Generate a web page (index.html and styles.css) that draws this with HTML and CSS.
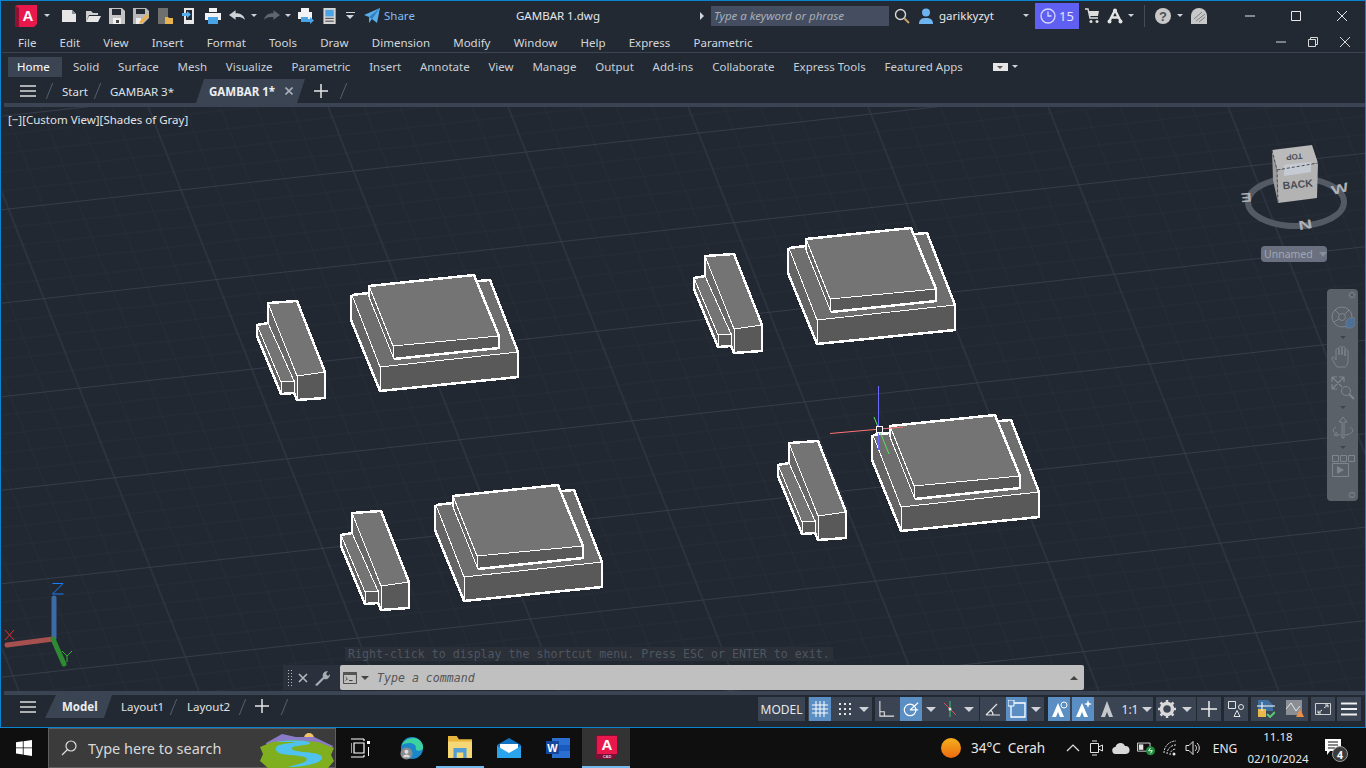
FILE: index.html
```html
<!DOCTYPE html>
<html lang="en">
<head>
  <meta charset="UTF-8">
  <title>GAMBAR 1.dwg</title>
  <link rel="stylesheet" href="styles.css">
</head>
<body>
<div class="window">

  <!-- title bar -->
  <div class="titlebar">
    <div class="qat">
      <svg class="logo" viewBox="0 0 24 22"><path d="M0 1l3-1h19v19l-3 3H0z" fill="#e8184d"/><path d="M0 1l4 2v19H0z" fill="#8f1233"/><text x="13" y="16" class="logo-a">A</text></svg>
      <span class="caret qat-c1"></span>
      <span class="qb qat-new"><svg class="ic16" viewBox="0 0 16 16"><path d="M1 2h10l4 4v8H1z" fill="#e6e6e6"/><path d="M11 2v4h4z" fill="#8a8f96"/></svg></span>
      <span class="qb"><svg class="ic16" viewBox="0 0 16 16"><path d="M1 3h5l2 2h5v2H4L1 14z" fill="#cfcfcf"/><path d="M4 8h12l-3 6H1z" fill="#e6e6e6"/></svg></span>
      <span class="qb"><svg class="ic16" viewBox="0 0 16 16"><path d="M0 0h13l3 3v13H0z" fill="#c4c4c4"/><path d="M3 1h9v6H3z" fill="#232a34"/><path d="M4 10h8v6H4z" fill="#f0f0f0"/><path d="M7 12h3v3H7z" fill="#444"/></svg></span>
      <span class="qb"><svg class="ic16" viewBox="0 0 16 16"><path d="M0 0h13l3 3v7l-6 6H0z" fill="#b9b9b9"/><path d="M3 1h9v5H3z" fill="#232a34"/><path d="M3 10h5v6H3z" fill="#eee"/><path d="M14 6l2 2-7 7-3 1 1-3z" fill="#f0b14a"/></svg></span>
      <span class="qb"><svg class="ic16" viewBox="0 0 16 16"><path d="M1 0h10v16H1z" fill="#6f6f6f"/><path d="M8 9h3l1 1h4v6H8z" fill="#e7b450"/></svg></span>
      <span class="qb"><svg class="ic16" viewBox="0 0 16 16"><path d="M3 0h10v16H3z" fill="#e8e8e8"/><path d="M5 2h6v10H5z" fill="#232a34"/><path d="M1 5h5V3l4 3.500-4 3.500V8H1z" fill="#55aef0"/></svg></span>
      <span class="qb"><svg class="ic16" viewBox="0 0 16 16"><path d="M4 0h8v4H4z" fill="#f2f2f2"/><path d="M0 5h16v7H0z" fill="#f2f2f2"/><path d="M3 9h10v7H3z" fill="#4aa3e4"/></svg></span>
      <span class="qb"><svg class="ic16" viewBox="0 0 17 16"><path d="M0 7l7-5v3c5 0 9 2 10 7-3-3-6-3-10-3v3z" fill="#cfd3d8"/></svg></span>
      <span class="caret qat-c2"></span>
      <span class="qb qat-redo"><svg class="ic16" viewBox="0 0 17 16"><path d="M17 7l-7-5v3C5 5 1 7 0 12c3-3 6-3 10-3v3z" fill="#5f6670"/></svg></span>
      <span class="caret qat-c3"></span>
      <span class="qb qat-plot"><svg class="ic16" viewBox="0 0 16 16"><path d="M3 0h8v4H3z" fill="#f2f2f2"/><path d="M0 4h14v7H0z" fill="#f2f2f2"/><path d="M3 9h7v5H3z" fill="#4aa3e4"/><path d="M7 11h5V9l4 3.500-4 3.500v-2H7z" fill="#4aa3e4"/></svg></span>
      <span class="qb"><svg class="ic16" viewBox="0 0 14 17"><path d="M0 0h13v17H0z" fill="#d5d5d5"/><path d="M2 2h9v7H2z" fill="#4aa3e4"/><path d="M2 11h9M2 14h9" stroke="#333"/></svg></span>
      <span class="qat-menu"></span>
      <svg class="ic16 qat-plane" viewBox="0 0 16 16"><path d="M0 7L16 0l-3 15-5-4-3 4v-6z" fill="#58aeea"/><path d="M5 9l11-9-8 11z" fill="#2f7fbd"/></svg>
      <span class="share">Share</span>
    </div>
    <div class="doc-title">GAMBAR 1.dwg</div>
    <span class="arrow-right"></span>
    <div class="search">Type a keyword or phrase</div>
    <svg class="ic16 t-mag" viewBox="0 0 16 16"><circle cx="6.500" cy="6.500" r="5" fill="none" stroke="#d8d8d8" stroke-width="1.400"/><path d="M10.500 10.500L15 15" stroke="#c9a06a" stroke-width="2"/></svg>
    <svg class="ic16 t-user" viewBox="0 0 16 16"><circle cx="8" cy="4.500" r="4" fill="#6db3f0"/><path d="M1 16c0-5 3-6 7-6s7 1 7 6z" fill="#6db3f0"/></svg>
    <span class="username">garikkyzyt</span>
    <span class="caret"></span>
    <div class="trial">
      <svg class="ic16" viewBox="0 0 16 16"><circle cx="8" cy="8" r="7" fill="none" stroke="#d9d9ff" stroke-width="1.300"/><path d="M8 3.500V8h3.500" fill="none" stroke="#d9d9ff" stroke-width="1.300"/></svg>
      <span>15</span>
    </div>
    <svg class="ic16 t-cart" viewBox="0 0 16 16"><path d="M1 1h3l2 9h8" fill="none" stroke="#ddd" stroke-width="1.400"/><path d="M4.500 3H15l-1 5H6z" fill="#ddd"/><circle cx="7" cy="13.500" r="1.500" fill="#ddd"/><circle cx="13" cy="13.500" r="1.500" fill="#ddd"/></svg>
    <svg class="ic16 t-a" viewBox="0 0 16 16"><path d="M8 2L2.500 13M8 2l5.500 11M4.500 9.500h7" fill="none" stroke="#e4e4e4" stroke-width="2.400"/><circle cx="8" cy="2.500" r="2" fill="#e4e4e4"/><circle cx="2.500" cy="13.500" r="2" fill="#e4e4e4"/><circle cx="13.500" cy="13.500" r="2" fill="#e4e4e4"/></svg>
    <span class="caret t-c2"></span>
    <span class="t-sep"></span>
    <svg class="ic16 t-help" viewBox="0 0 16 16"><circle cx="8" cy="8" r="8" fill="#c8c8c8"/><text x="8" y="12.500" class="help-q">?</text></svg>
    <span class="caret t-c3"></span>
    <svg class="ic16 t-globe" viewBox="0 0 16 16"><path d="M0 8a8 8 0 0 1 16 0v8H0z" fill="#c8c8c8"/><path d="M3 11l8-7M5 13l9-7M8 14l6-5" stroke="#7c8086"/></svg>
    <div class="winbtns">
      <span class="winbtn"><svg class="ic12" viewBox="0 0 12 12"><path d="M1 6h10" stroke="#e6e6e6"/></svg></span>
      <span class="winbtn"><svg class="ic12" viewBox="0 0 12 12"><path d="M1.500 1.500h9v9h-9z" fill="none" stroke="#e6e6e6"/></svg></span>
      <span class="winbtn"><svg class="ic12" viewBox="0 0 12 12"><path d="M1 1l10 10M11 1L1 11" stroke="#e6e6e6"/></svg></span>
    </div>
  </div>

  <!-- menu bar -->
  <div class="menubar">
    <span>File</span><span>Edit</span><span>View</span><span>Insert</span><span>Format</span><span>Tools</span><span>Draw</span><span>Dimension</span><span>Modify</span><span>Window</span><span>Help</span><span>Express</span><span>Parametric</span>
    <div class="docbtns">
      <svg class="ic12" viewBox="0 0 12 12"><path d="M1 6h10" stroke="#d8d8d8"/></svg>
      <svg class="ic12" viewBox="0 0 12 12"><path d="M1.500 3.500h7v7h-7zM3.500 3.500v-2h7v7h-2" fill="none" stroke="#d8d8d8"/></svg>
      <svg class="ic12" viewBox="0 0 12 12"><path d="M1 1l10 10M11 1L1 11" stroke="#d8d8d8"/></svg>
    </div>
  </div>

  <!-- ribbon tabs -->
  <div class="ribbon">
    <span class="rtab on">Home</span><span class="rtab">Solid</span><span class="rtab">Surface</span><span class="rtab">Mesh</span><span class="rtab">Visualize</span><span class="rtab">Parametric</span><span class="rtab">Insert</span><span class="rtab">Annotate</span><span class="rtab">View</span><span class="rtab">Manage</span><span class="rtab">Output</span><span class="rtab">Add-ins</span><span class="rtab">Collaborate</span><span class="rtab">Express Tools</span><span class="rtab">Featured Apps</span>
    <span class="ribbon-min"><span class="mini-tri"></span></span>
    <span class="caret ribbon-c"></span>
  </div>

  <!-- file tabs -->
  <div class="doctabs">
    <svg class="burger" viewBox="0 0 16 12"><path d="M0 1h16M0 6h16M0 11h16" stroke="#dcdcdc" stroke-width="1.500"/></svg>
    <span class="slash dt-s1"></span>
    <span class="dt dt-start">Start</span>
    <span class="slash dt-s2"></span>
    <span class="dt dt-g3">GAMBAR 3*</span>
    <div class="dt-active">
      <span class="dt-active-name">GAMBAR 1*</span>
      <svg class="ic8" viewBox="0 0 8 8"><path d="M0.500 0.500l7 7M7.500 0.500l-7 7" stroke="#a9afb7" stroke-width="1.600"/></svg>
    </div>
    <svg class="plus dt-plus" viewBox="0 0 14 14"><path d="M7 0v14M0 7h14" stroke="#e6e6e6" stroke-width="1.500"/></svg>
    <span class="slash dt-s3"></span>
  </div>
  <div class="strip"></div>

  <!-- drawing area -->
  <div class="viewport">
    <svg class="canvas" viewBox="2 107 1363 584">
      <defs>
        <pattern id="grid" patternUnits="userSpaceOnUse" width="172.500" height="89.600" patternTransform="matrix(1 -0.11 0.395 1 77.05 154.69)">
          <path d="M17.250 0V89.600M51.750 0V89.600M120.750 0V89.600M155.250 0V89.600M0 8.960H172.500M0 26.880H172.500M0 62.720H172.500M0 80.640H172.500" stroke="#272e38" stroke-width="0.800"/>
          <path d="M86.250 0V89.600M0 44.800H172.500" stroke="#363d4a" stroke-width="1"/>
        </pattern>
        <g id="part">
          <!-- small piece -->
          <path d="M257 325L268 323 294 381 281 382z" fill="#747474"/>
          <path d="M257 325L281 382V394L257 336z" fill="#626262"/>
          <path d="M281 382L294 381V393L281 394z" fill="#595959"/>
          <path d="M268 303L297 376V400L294 393V381L268 323z" fill="#686868"/>
          <path d="M268 303L297 301 325 372 297 376z" fill="#747474"/>
          <path d="M297 376L325 372V398L297 400z" fill="#595959"/>
          <path class="thin" d="M257 325L281 382V394M281 382L294 381V393M268 303L297 376V400M268 323L294 381M297 376L325 372"/>
          <path class="thick" d="M268 303L297 301 325 372V398L297 400 294 393 281 394 257 336V325L268 323z"/>
          <!-- large piece -->
          <path d="M352 295L490 280 518 352 380 367z" fill="#6e6e6e"/>
          <path d="M352 295L380 367V391L351 320z" fill="#646464"/>
          <path d="M380 367L518 352V377L380 391z" fill="#595959"/>
          <path d="M369 286L393 346V359L369 297z" fill="#666"/>
          <path d="M369 286L474 275 499 336 393 346z" fill="#747474"/>
          <path d="M393 346L499 336V348L394 359z" fill="#595959"/>
          <path class="thin" d="M352 295L380 367V391M380 367L518 352M369 286L393 346V359M369 297L394 359M393 346L499 336"/>
          <path class="thick" d="M369 297V286L474 275 499 336V348L394 359"/>
          <path class="thick" d="M352 295L369 293M478 281L490 280 518 352V377L380 391 351 320V295"/>
        </g>
      </defs>
      <rect x="2" y="107" width="1363" height="584" fill="url(#grid)"/>

      <use href="#part"/>
      <use href="#part" x="437" y="-47"/>
      <use href="#part" x="84" y="210"/>
      <use href="#part" x="521" y="140"/>

      <!-- crosshair at the origin -->
      <path d="M878.500 386V450" stroke="#6a6aff"/>
      <path d="M830 433.500L903 427" stroke="#ff7272"/>
      <path d="M874 417L889 454" stroke="#58e058"/>
      <rect x="876.500" y="426.500" width="6" height="6" fill="#2a313c" stroke="#fff"/>

      <!-- world axes -->
      <path d="M54 598V638" stroke="#3d6ba6" stroke-width="5" stroke-linecap="round"/>
      <path d="M53 639L7 645" stroke="#a65050" stroke-width="5" stroke-linecap="round"/>
      <path d="M53 639L64 664" stroke="#2f8a33" stroke-width="5" stroke-linecap="round"/>
      <path d="M52.500 583.500h10.500l-10.500 10.500h11" fill="none" stroke="#1a7cff"/>
      <path d="M5 630l9 10M14 630l-9 10" stroke="#e62e2e"/>
      <path d="M62 651l5 5 5-5M67 656v6" fill="none" stroke="#2fb52f"/>

      <!-- compass and cube -->
      <ellipse cx="1296" cy="202" rx="48" ry="24" fill="none" stroke="#535a64" stroke-width="6"/>
      <text class="compass" transform="translate(1246 193) rotate(176) scale(1 0.8)">E</text>
      <text class="compass" transform="translate(1306 229) rotate(-10) scale(1.200 0.800)">N</text>
      <text class="compass" transform="translate(1341 193) rotate(-14) scale(1.150 0.800)">W</text>
      <path d="M1272 150L1312 145 1318 163 1277 170z" fill="#bababa"/>
      <path d="M1272 150L1277 170 1278 203 1273 180z" fill="#9c9c9c"/>
      <path d="M1277 170L1318 163 1317 198 1278 203z" fill="#b3b3b3"/>
      <path d="M1284 165L1311 162V172L1284 176z" fill="#c6cbd3"/>
      <path d="M1272 150L1277 170 1278 203M1277 170L1318 163" fill="none" stroke="#4b4f55" stroke-dasharray="3 2"/>
      <text class="cube-back" transform="translate(1298 188) rotate(-5)">BACK</text>
      <text class="cube-top" transform="translate(1294 154) rotate(175)">TOP</text>
    </svg>

    <div class="view-label">[−][Custom View][Shades of Gray]</div>

    <div class="unnamed">Unnamed <span class="unnamed-tri"></span></div>

    <div class="navbar">
      <svg class="nav-x" viewBox="0 0 8 8"><circle cx="4" cy="4" r="3.500" fill="#70757d"/><path d="M2.500 2.500l3 3M5.500 2.500l-3 3" stroke="#4d525a"/></svg>
      <svg class="nav-ic" viewBox="0 0 24 24"><circle cx="11" cy="11" r="10" fill="none" stroke="#80858d"/><circle cx="11" cy="11" r="3.500" fill="none" stroke="#80858d"/><path d="M4 4l5 5M18 4l-5 5M3 16l5-3" stroke="#80858d"/><path d="M15 15l3-3h6v7l-3 3h-6z" fill="#4e6f96" stroke="#80858d" stroke-width="0.500"/></svg>
      <span class="nav-tri"></span>
      <svg class="nav-ic nav-hand" viewBox="0 0 24 24"><path d="M6 22C4 19 1 15 1 13c0-2 3-1 4 2V5c0-2 3-2 3 0v5V3c0-2 3-2 3 0v7V3c0-2 3-2 3 0v8V6c0-2 3-2 3 0v10c0 3-2 6-3 6z" fill="none" stroke="#80858d"/></svg>
      <svg class="nav-ic" viewBox="0 0 24 24"><path d="M1 1l10 10M13 1L1 13M1 1v5M1 1h5M13 1H8M13 1v5M1 13V8M1 13h5" fill="none" stroke="#80858d" stroke-width="1.200"/><circle cx="15" cy="15" r="4.500" fill="none" stroke="#80858d"/><path d="M18 18l5 5" stroke="#80858d" stroke-width="2"/></svg>
      <span class="nav-tri"></span>
      <svg class="nav-ic" viewBox="0 0 24 24"><path d="M12 1l4 5h-3v16h-2V6H8z" fill="none" stroke="#80858d"/><path d="M5 11C0 14 2 18 10 19M19 11c5 3 3 7-5 8M6 16l-3 3 4 1" fill="none" stroke="#80858d"/></svg>
      <span class="nav-tri"></span>
      <svg class="nav-ic nav-motion" viewBox="0 0 24 24"><path d="M1.500 1.500h6v6h-6zM9.500 1.500h6v6h-6zM17.500 1.500h6v6h-6zM1.500 9.500h16v13h-16z" fill="none" stroke="#80858d"/><path d="M6 12l7 4-7 4z" fill="#80858d"/></svg>
      <svg class="nav-x nav-end" viewBox="0 0 8 8"><circle cx="4" cy="4" r="3.500" fill="#70757d"/><path d="M2 4h4" stroke="#4d525a"/></svg>
    </div>

    <div class="cmd-msg">Right-click to display the shortcut menu. Press ESC or ENTER to exit.</div>
    <div class="cmd">
      <div class="cmd-tools">
        <span class="grip"></span>
        <svg class="ic10" viewBox="0 0 10 10"><path d="M1 1l8 8M9 1l-8 8" stroke="#b5b9be" stroke-width="1.600"/></svg>
        <svg class="ic16" viewBox="0 0 16 16"><path d="M1 15l8-8c-1-3 1-6 5-6l-2 3 2 2 2-2c0 4-3 6-6 5l-7 7z" fill="#a9adb2"/></svg>
      </div>
      <div class="cmd-input">
        <svg class="cmd-ic" viewBox="0 0 16 14"><path d="M.5.500h15v13H.5z" fill="#c0c0c0" stroke="#333"/><path d="M.5.500h15v3H.5z" fill="#555"/><path d="M3 6l2 2-2 2M7 10h4" fill="none" stroke="#222"/></svg>
        <span class="cmd-car"></span>
        <span class="cmd-text">Type a command</span>
        <span class="cmd-up"></span>
      </div>
    </div>
  </div>

  <div class="strip strip-low"></div>

  <!-- status bar -->
  <div class="statusbar">
    <svg class="burger" viewBox="0 0 16 12"><path d="M0 1h16M0 6h16M0 11h16" stroke="#dcdcdc" stroke-width="1.500"/></svg>
    <span class="tab-model">Model</span>
    <span class="lt lt-1">Layout1</span>
    <span class="slash lt-s1"></span>
    <span class="lt lt-2">Layout2</span>
    <span class="slash lt-s2"></span>
    <svg class="plus lt-plus" viewBox="0 0 14 14"><path d="M7 0v14M0 7h14" stroke="#e6e6e6" stroke-width="1.500"/></svg>
    <span class="slash lt-s3"></span>

    <div class="tray-tools">
      <div class="sg"><span class="cell model-btn">MODEL</span></div>
      <div class="sg">
        <span class="cell w22 on first"><svg class="ic16" viewBox="0 0 16 16"><path d="M4 0v16M8 0v16M12 0v16M0 4h16M0 8h16M0 12h16" stroke="#fff"/></svg></span>
        <span class="cell w21 ml3"><svg class="ic16" viewBox="0 0 16 16"><path d="M2 2h2v2H2zM7 2h2v2H7zM12 2h2v2h-2zM2 7h2v2H2zM7 7h2v2H7zM12 7h2v2h-2zM2 12h2v2H2zM7 12h2v2H7zM12 12h2v2h-2z" fill="#e4e4e4"/></svg></span>
        <span class="cell w17"><span class="caret lg"></span></span>
      </div>
      <div class="sg">
        <span class="cell w23"><svg class="ic16" viewBox="0 0 18 18"><path d="M1 0v17h16M1 12h5v5" fill="none" stroke="#e4e4e4" stroke-width="1.200"/></svg></span>
        <span class="cell w22 on ml2"><svg class="ic16" viewBox="0 0 18 18"><circle cx="8" cy="10" r="6.500" fill="none" stroke="#fff" stroke-width="1.300"/><path d="M8 10L17 2M8 10h9" stroke="#fff" stroke-width="1.300"/></svg></span>
        <span class="cell w18"><span class="caret lg"></span></span>
        <span class="cell w19"><svg class="ic16" viewBox="0 0 16 16"><path d="M8 0v16" stroke="#42c26a"/><path d="M2 2l12 12" stroke="#e05050"/><circle cx="8" cy="8" r="1.500" fill="#e4e4e4"/></svg></span>
        <span class="cell w20"><span class="caret lg"></span></span>
      </div>
      <div class="sg tight">
        <span class="cell w25"><svg class="ic16" viewBox="0 0 16 16"><path d="M1 14h14M1 14L12 3M8 14c0-3-1-4-3-5" fill="none" stroke="#e4e4e4" stroke-width="1.200"/></svg></span>
        <span class="cell w21 on ml1"><svg class="ic18" viewBox="0 0 18 18"><path d="M3 3h14v14H3z" fill="none" stroke="#fff" stroke-width="1.300"/><path d="M0 0h6v6H0z" fill="#5b8fc4" stroke="#fff"/></svg></span>
        <span class="cell w17"><span class="caret lg"></span></span>
      </div>
      <div class="sg wide">
        <span class="cell w22 on first0"><svg class="ic18" viewBox="0 0 18 18"><path d="M8 3L2 17h4l2-5 2 5h4z" fill="#fff"/><circle cx="14" cy="5" r="3" fill="none" stroke="#fff"/></svg></span>
        <span class="cell w22 on ml2"><svg class="ic18" viewBox="0 0 18 18"><path d="M8 3L2 17h4l2-5 2 5h4z" fill="#fff"/><path d="M14 0l1 3 3 1-3 1-1 3-1-3-3-1 3-1z" fill="#fff"/></svg></span>
        <span class="cell w25"><svg class="ic18" viewBox="0 0 18 18"><path d="M9 1L3 17h4l2-5 2 5h4z" fill="#c4c8cd"/></svg></span>
        <span class="cell w22 scale">1:1</span>
        <span class="cell w12"><span class="caret lg"></span></span>
      </div>
      <div class="sg">
        <span class="cell w22"><svg class="ic18" viewBox="0 0 18 18"><circle cx="9" cy="9" r="5.500" fill="none" stroke="#d8d8d8" stroke-width="3.500"/><path d="M9 0v3M9 15v3M0 9h3M15 9h3M2.500 2.500l2 2M13.500 13.500l2 2M15.500 2.500l-2 2M4.500 13.500l-2 2" stroke="#d8d8d8" stroke-width="2.500"/></svg></span>
        <span class="cell w18"><span class="caret lg"></span></span>
      </div>
      <div class="sg tight"><span class="cell w24"><svg class="ic18" viewBox="0 0 18 18"><path d="M9 1v16M1 9h16" stroke="#f0f0f0" stroke-width="1.500"/></svg></span></div>
      <div class="sg"><span class="cell w24"><svg class="ic18" viewBox="0 0 18 18"><path d="M1.500 1.500h7v7h-7zM7 16.500l3-6 3 6z" fill="none" stroke="#e4e4e4"/><circle cx="14" cy="7" r="2.500" fill="none" stroke="#e4e4e4"/></svg></span></div>
      <div class="sg">
        <span class="cell w30"><svg class="ic18" viewBox="0 0 18 18"><path d="M1 0h10l5 5v6H1z" fill="#3e6f9f"/><path d="M1 9h8v8H1z" fill="#eab84a"/><path d="M0 6h18M5 2v9" stroke="#fff"/><path d="M10 14l3 3 5-5" fill="none" stroke="#59c777" stroke-width="2"/></svg></span>
        <span class="cell w27"><svg class="ic18" viewBox="0 0 18 18"><path d="M0 0h16v15H0z" fill="#8b8f95"/><path d="M0 9l5-6 5 8 4-5" fill="none" stroke="#e4e4e4"/><path d="M14 9l4 8h-8z" fill="#e8904a"/></svg></span>
      </div>
      <div class="sg"><span class="cell w24"><svg class="ic16" viewBox="0 0 16 16"><path d="M.5 2.500h15v11H.5z" fill="none" stroke="#d0d0d0"/><path d="M9 7l4-3M10 4h3v2.500M7 9l-4 3M6 12H3V9.500" fill="none" stroke="#e4e4e4"/></svg></span></div>
      <div class="sg tight1"><span class="cell w24"><svg class="ic16" viewBox="0 0 16 14"><path d="M0 1.500h16M0 7h16M0 12.500h16" stroke="#f0f0f0" stroke-width="1.800"/></svg></span></div>
    </div>
  </div>
</div>

<!-- windows taskbar -->
<div class="taskbar">
  <svg class="start" viewBox="0 0 16 16"><path d="M0 2.300l6.800-1V7.500H0zM7.600 1.200L16 0v7.500H7.600zM0 8.300h6.800v6.300l-6.800-1zM7.600 8.300H16V16l-8.400-1.200z" fill="#fff"/></svg>
  <div class="tsearch">
    <svg class="ic16 ts-mag" viewBox="0 0 16 16"><circle cx="10" cy="6" r="5" fill="none" stroke="#ddd" stroke-width="1.200"/><path d="M6.500 9.500L1 15" stroke="#ddd" stroke-width="1.200"/></svg>
    <span class="ts-text">Type here to search</span>
    <svg class="ts-art" viewBox="0 0 74 38">
      <circle cx="49" cy="8" r="5" fill="#f3c26b"/>
      <path d="M6 13L22 4l14 3 18 0 19 9-4 8H8z" fill="#8a7bc8"/>
      <path d="M0 17l12-5 22-2 24 2 16 6-3 7 3 6-6 7H8L0 31l3-7z" fill="#7fae1e"/>
      <path d="M16 12c14-2 32-2 34 1s-20 2-18 6 28 2 30 8-18 10-34 10c10-3 22-5 18-9s-28-1-30-8 14-6 20-8z" fill="#4fc3ee"/>
    </svg>
  </div>
  <svg class="t-ic taskview" viewBox="0 0 20 20"><path d="M0 1h13M0 19h13M3 5h10v10H3z M0 5v10M13 1v2M13 17v2" fill="none" stroke="#fff" stroke-width="1.200"/><path d="M16 3h3v3h-3z" fill="#fff"/><path d="M17.500 9v9" stroke="#fff"/></svg>
  <span class="task edge"><svg class="t-ic" viewBox="0 0 26 26"><circle cx="13" cy="13" r="12" fill="#1b86c9"/><path d="M2 10C5 1 22-2 25 11c1 6-7 6-8 3 2-6-8-9-15-4z" fill="#3bd1a0"/><circle cx="7" cy="19" r="6.500" fill="#8a8d90"/><circle cx="7" cy="17" r="2.200" fill="#ddd"/><path d="M3 23c1-4 7-4 8 0z" fill="#ddd"/></svg></span>
  <span class="task explorer"><svg class="t-ic" viewBox="0 0 22 20"><path d="M0 0h8l2 3h12v17H0z" fill="#e8b53c"/><path d="M0 5h22v15H0z" fill="#f6d776"/><path d="M5 11h12v9h-3v-5H8v5H5z" fill="#4f9ed8"/></svg></span>
  <span class="task mail"><svg class="t-ic" viewBox="0 0 24 20"><path d="M0 7L12 0l12 7v13H0z" fill="#0f73c1"/><path d="M3 6h18v6l-9 5-9-5z" fill="#fff"/><path d="M0 8l12 7 12-7v12H0z" fill="#2aa5ec"/></svg></span>
  <span class="task word"><svg class="t-ic" viewBox="0 0 24 20"><path d="M6 0h18v20H6z" fill="#2a6fd1"/><path d="M6 7h18v6H6z" fill="#185abd"/><path d="M0 3h13v13H0z" fill="#12479b"/><text x="6.500" y="13.500" class="word-w">W</text></svg></span>
  <span class="task acad"><svg class="t-ic" viewBox="0 0 22 24"><path d="M0 2l3-2h19v19l-3 5H1z" fill="#7a1134"/><path d="M2 1h20v18H2z" fill="#e8184d"/><text x="12" y="15" class="logo-a">A</text><text x="12" y="22.500" class="acad-cad">CAD</text></svg></span>

  <div class="tray">
    <span class="sun"></span>
    <span class="weather">34°C&nbsp; Cerah</span>
    <svg class="tr-ic tr-up" viewBox="0 0 14 14"><path d="M1 10l6-6 6 6" fill="none" stroke="#e4e4e4" stroke-width="1.200"/></svg>
    <svg class="tr-ic" viewBox="0 0 14 16"><path d="M1.500 3.500h8v9h-8zM9.500 7l4-2v6l-4-2M3 1h5M3 15h5" fill="none" stroke="#e4e4e4"/></svg>
    <svg class="tr-ic tr-cloud" viewBox="0 0 18 12"><path d="M4 12a3.500 3.500 0 0 1-.5-7A5 5 0 0 1 13 4a4 4 0 0 1 1 8z" fill="#d8d8d8"/></svg>
    <svg class="tr-ic tr-batt" viewBox="0 0 20 16"><path d="M.5 2.500h14v9H.5z" fill="none" stroke="#e4e4e4"/><path d="M2 4h5v6H2z" fill="#e4e4e4"/><circle cx="15" cy="11" r="5" fill="#1d8f3c"/><path d="M15 8l-2 3h4l-2 3" fill="none" stroke="#fff"/></svg>
    <svg class="tr-ic tr-wifi" viewBox="0 0 16 16"><path d="M1 13a12 12 0 0 1 12-12M4 14a9 9 0 0 1 9-9M7 15a6 6 0 0 1 6-6" fill="none" stroke="#e4e4e4" stroke-dasharray="2 1"/><circle cx="11" cy="14" r="1.500" fill="#e4e4e4"/></svg>
    <svg class="tr-ic" viewBox="0 0 16 16"><path d="M1 5.500h3l4-4v13l-4-4H1z" fill="none" stroke="#e4e4e4"/><path d="M10 5c2 2 2 4 0 6M12 3c3 3 3 7 0 10" fill="none" stroke="#e4e4e4"/></svg>
    <span class="lang">ENG</span>
    <div class="clock"><div>11.18</div><div>02/10/2024</div></div>
    <span class="notif">
      <svg class="notif-ic" viewBox="0 0 16 18"><path d="M0 0h16v12H5l-3 4v-4H0z" fill="#fff"/><path d="M3 3h10M3 6h10M3 9h7" stroke="#111"/></svg>
      <span class="badge">4</span>
    </span>
  </div>
</div>
</body>
</html>
```

FILE: styles.css
```css
/* base page */
html, body {
  margin: 0;
  height: 100%;
  overflow: hidden;
}

body {
  width: 1366px;
  height: 768px;
  font-family: "Noto Sans", "Open Sans", sans-serif;
  font-size: 11.5px;
  color: #d3d7dc;
  background: #0f0f0f;
}

svg {
  display: block;
  flex-shrink: 0;
}

.ic8 { width: 8px; height: 8px; }
.ic10 { width: 10px; height: 10px; }
.ic12 { width: 12px; height: 12px; }
.ic16 { width: 16px; height: 16px; }
.ic18 { width: 18px; height: 18px; }

.caret {
  width: 0;
  height: 0;
  border-left: 3px solid transparent;
  border-right: 3px solid transparent;
  border-top: 3px solid #cfd3d9;
  flex-shrink: 0;
}

.caret.lg {
  border-left-width: 5px;
  border-right-width: 5px;
  border-top-width: 5px;
}

/* application window */
.window {
  width: 1366px;
  height: 728px;
  box-sizing: border-box;
  border: 1px solid #0a84cf;
  padding: 1px 0 0 1px;
  background: #222933;
  display: flex;
  flex-direction: column;
}

/* title bar */
.titlebar {
  height: 27px;
  display: flex;
  align-items: center;
  flex-shrink: 0;
}

.qat {
  width: 514px;
  display: flex;
  align-items: center;
  flex-shrink: 0;
}

.logo {
  width: 24px;
  height: 22px;
  margin-left: 13px;
}

.logo-a {
  font-family: "Liberation Sans", sans-serif;
  font-size: 15px;
  font-weight: bold;
  fill: #fff;
  text-anchor: middle;
}

.qat-c1 { margin-left: 5px; }

.qb {
  width: 24px;
  display: flex;
  justify-content: center;
  flex-shrink: 0;
}

.qat-new { margin-left: 7px; }
.qat-c2 { margin-left: 2px; }
.qat-redo { margin-left: 3px; }
.qat-c3 { margin-left: 1px; }
.qat-plot { margin-left: 3px; }

.qat-menu {
  width: 9px;
  height: 8px;
  margin-left: 4px;
  box-sizing: border-box;
  border-top: 1px solid #cfd3d9;
  flex-shrink: 0;
  position: relative;
}

.qat-menu::after {
  content: "";
  display: block;
  width: 0;
  margin-top: 2px;
  border-left: 4.500px solid transparent;
  border-right: 4.500px solid transparent;
  border-top: 4px solid #cfd3d9;
}

.qat-plane { margin-left: 9px; }

.share {
  margin-left: 4px;
  color: #7fbdf0;
}

.doc-title {
  width: 182px;
  color: #e4e6e9;
  flex-shrink: 0;
}

.arrow-right {
  width: 0;
  height: 0;
  border-top: 4px solid transparent;
  border-bottom: 4px solid transparent;
  border-left: 4px solid #d0d4d9;
  margin-left: 2px;
  flex-shrink: 0;
}

.search {
  width: 178px;
  height: 20px;
  line-height: 20px;
  box-sizing: border-box;
  margin-left: 7px;
  padding-left: 3px;
  background: #454e60;
  color: #a8aeb8;
  font-style: italic;
  flex-shrink: 0;
}

.t-mag { margin-left: 5px; }
.t-user { margin-left: 8px; }

.username {
  width: 84px;
  margin-left: 5px;
  color: #e6e8ea;
}

.trial {
  width: 44px;
  height: 26px;
  margin-left: 6px;
  display: flex;
  align-items: center;
  justify-content: center;
  gap: 3px;
  background: #5f5ff2;
  color: #e6e6ff;
  font-size: 13px;
}

.t-cart { margin-left: 5px; }
.t-a { margin-left: 7px; }
.t-c2 { margin-left: 5px; }

.t-sep {
  width: 1px;
  height: 22px;
  background: #454c57;
  margin-left: 10px;
}

.t-help { margin-left: 10px; }

.help-q {
  font-family: "Liberation Sans", sans-serif;
  font-size: 13px;
  font-weight: bold;
  fill: #4a4f55;
  text-anchor: middle;
}

.t-c3 { margin-left: 6px; }
.t-globe { margin-left: 8px; }

.winbtns {
  display: flex;
  margin-left: auto;
}

.winbtn {
  width: 46px;
  display: flex;
  justify-content: center;
}

/* menu bar */
.menubar {
  height: 24px;
  box-sizing: border-box;
  border-bottom: 1px solid #3b4453;
  padding: 3px 0 0 16px;
  display: flex;
  align-items: center;
  gap: 23.200px;
  flex-shrink: 0;
}

.docbtns {
  margin-left: auto;
  margin-right: 14px;
  display: flex;
  gap: 20px;
}

/* ribbon tabs */
.ribbon {
  height: 26px;
  padding-left: 6px;
  padding-top: 1px;
  box-sizing: border-box;
  display: flex;
  align-items: center;
  flex-shrink: 0;
}

.rtab {
  height: 20px;
  line-height: 20px;
  padding: 0 9px;
  margin-right: 0.800px;
  color: #c9ced5;
  white-space: nowrap;
}

.rtab.on {
  width: 36px;
  margin-right: 2px;
  background: #3b4453;
  color: #fff;
}

.ribbon-min {
  width: 15px;
  height: 8px;
  margin-left: 20px;
  background: #e6e6e6;
  display: flex;
  justify-content: center;
  padding-top: 3px;
  box-sizing: border-box;
}

.mini-tri {
  width: 0;
  height: 0;
  border-left: 3px solid transparent;
  border-right: 3px solid transparent;
  border-top: 3px solid #555;
}

.ribbon-c { margin-left: 4px; }

/* file tabs */
.doctabs {
  height: 24px;
  display: flex;
  align-items: center;
  flex-shrink: 0;
  color: #dfe2e6;
}

.burger {
  width: 16px;
  height: 12px;
  margin-left: 18px;
}

.slash {
  width: 1px;
  height: 16px;
  background: #566070;
  transform: skewX(-22deg);
  flex-shrink: 0;
}

.dt-s1 { margin-left: 13px; }
.dt-start { margin-left: 12px; width: 35px; }
.dt-s2 { margin-left: 0; }
.dt-g3 { margin-left: 12px; width: 85px; }

.dt-active {
  width: 109px;
  height: 24px;
  margin-left: 1px;
  background: #3b4453;
  clip-path: polygon(8px 0, 100% 0, calc(100% - 8px) 100%, 0 100%);
  display: flex;
  align-items: center;
  justify-content: space-between;
  box-sizing: border-box;
  padding: 0 12px 0 13px;
  flex-shrink: 0;
}

.dt-active-name {
  font-weight: 700;
  color: #eceef0;
}

.plus {
  width: 14px;
  height: 14px;
}

.dt-plus { margin-left: 9px; }
.dt-s3 { margin-left: 15px; }

.strip {
  height: 4px;
  margin-left: 2px;
  background: #3b4453;
  flex-shrink: 0;
}

/* drawing area */
.viewport {
  position: relative;
  height: 584px;
  flex-shrink: 0;
  background: #212831;
  overflow: hidden;
}

.canvas {
  position: absolute;
  left: 0;
  top: 0;
  width: 1363px;
  height: 584px;
}

.thin {
  fill: none;
  stroke: #fff;
  stroke-width: 1;
  shape-rendering: crispEdges;
}

.thick {
  fill: none;
  stroke: #fff;
  stroke-width: 2.500;
  stroke-linejoin: round;
  shape-rendering: crispEdges;
}

.compass {
  font-family: "Liberation Sans", sans-serif;
  font-size: 16px;
  font-weight: bold;
  fill: #adb1b7;
  text-anchor: middle;
}

.cube-back {
  font-family: "Liberation Sans", sans-serif;
  font-size: 10.500px;
  font-weight: bold;
  fill: #4a4e55;
  text-anchor: middle;
}

.cube-top {
  font-family: "Liberation Sans", sans-serif;
  font-size: 8px;
  font-weight: bold;
  fill: #4a4e55;
  text-anchor: middle;
}

.view-label {
  position: absolute;
  left: 6px;
  top: 5px;
  color: #e0e3e6;
}

.unnamed {
  position: absolute;
  left: 1259px;
  top: 139px;
  width: 66px;
  height: 16px;
  line-height: 15px;
  box-sizing: border-box;
  padding-left: 3px;
  border-radius: 4px;
  background: #6a7080;
  color: #a2a7b2;
  font-size: 10.500px;
  display: flex;
  gap: 6px;
  align-items: center;
}

.unnamed-tri {
  width: 0;
  height: 0;
  border-left: 4px solid transparent;
  border-right: 4px solid transparent;
  border-top: 5px solid #888d99;
}

.navbar {
  position: absolute;
  left: 1325px;
  top: 182px;
  width: 31px;
  height: 212px;
  box-sizing: border-box;
  padding: 2px 0 2px;
  border-radius: 4px;
  background: #5b6169;
  display: flex;
  flex-direction: column;
  align-items: center;
}

.nav-x {
  width: 8px;
  height: 8px;
  align-self: flex-end;
  margin-right: 2px;
}

.nav-ic {
  width: 24px;
  height: 24px;
  margin-top: 7px;
}

.nav-hand { margin-top: 6px; }
.nav-motion { margin-top: 5px; }
.nav-end { margin-top: auto; }

.nav-tri {
  width: 0;
  height: 0;
  margin-top: 6px;
  border-left: 3px solid transparent;
  border-right: 3px solid transparent;
  border-top: 3px solid #3f444b;
}

.cmd-msg {
  position: absolute;
  left: 343px;
  top: 540px;
  height: 14px;
  line-height: 14px;
  padding: 0 3px;
  background: #2a2f38;
  color: #4f5660;
  font-family: "DejaVu Sans Mono", monospace;
  font-size: 11.600px;
  white-space: nowrap;
}

.cmd {
  position: absolute;
  left: 281px;
  top: 558px;
  height: 25px;
  display: flex;
}

.cmd-tools {
  width: 57px;
  box-sizing: border-box;
  padding-left: 4px;
  background: #2a313c;
  display: flex;
  align-items: center;
  gap: 6px;
}

.grip {
  width: 5px;
  height: 17px;
  background-image: radial-gradient(#b5b9be 1px, transparent 1px);
  background-size: 3px 3px;
}

.cmd-input {
  width: 744px;
  background: #c0c0c0;
  border-radius: 2px;
  display: flex;
  align-items: center;
  position: relative;
}

.cmd-ic {
  width: 16px;
  height: 12px;
  margin-left: 2px;
}

.cmd-car {
  width: 0;
  height: 0;
  margin-left: 3px;
  border-left: 4px solid transparent;
  border-right: 4px solid transparent;
  border-top: 4px solid #444;
}

.cmd-text {
  margin-left: 8px;
  color: #555;
  font-family: "DejaVu Sans Mono", monospace;
  font-style: italic;
  font-size: 11.600px;
}

.cmd-up {
  margin-left: auto;
  margin-right: 6px;
  width: 0;
  height: 0;
  border-left: 4px solid transparent;
  border-right: 4px solid transparent;
  border-bottom: 4px solid #444;
}

.strip-low { margin-left: 2px; }

/* status bar */
.statusbar {
  height: 32px;
  flex-shrink: 0;
  display: flex;
  align-items: flex-start;
  position: relative;
  color: #e0e3e6;
}

.statusbar .burger { margin-top: 6px; }

.tab-model {
  width: 67px;
  height: 23px;
  line-height: 23px;
  margin-left: 9px;
  box-sizing: border-box;
  padding-left: 17px;
  background: #3b4453;
  clip-path: polygon(11px 0, 100% 0, calc(100% - 8px) 100%, 0 100%);
  font-weight: 700;
  color: #eceef0;
  flex-shrink: 0;
}

.lt { line-height: 23px; }
.lt-1 { margin-left: 9px; width: 52px; }
.lt-s1 { margin-top: 4px; }
.lt-2 { margin-left: 13px; width: 54px; }
.lt-s2 { margin-top: 4px; margin-left: 1px; }
.lt-plus { margin-left: 12px; margin-top: 4px; }
.lt-s3 { margin-left: 15px; margin-top: 4px; }

.tray-tools {
  margin-left: auto;
  margin-right: 4px;
  margin-top: 2px;
  display: flex;
  gap: 3px;
}

.sg {
  height: 24px;
  display: flex;
  background: #3b4453;
}

.sg.tight { margin-left: -2px; }
.sg.wide { margin-left: 1px; }
.sg.tight1 { margin-left: -1px; }

.cell {
  height: 24px;
  display: flex;
  align-items: center;
  justify-content: center;
  flex-shrink: 0;
}

.cell.on { background: #5b8fc4; }
.cell.first { margin-left: 1px; }

.model-btn {
  width: 47px;
  font-size: 12px;
  color: #e8e8e8;
}

.scale { font-size: 12px; color: #e4e4e4; }

.w12 { width: 12px; }
.w17 { width: 17px; }
.w18 { width: 18px; }
.w19 { width: 19px; }
.w20 { width: 20px; }
.w21 { width: 21px; }
.w22 { width: 22px; }
.w23 { width: 23px; }
.w24 { width: 24px; }
.w25 { width: 25px; }
.w27 { width: 27px; }
.w30 { width: 30px; }
.ml1 { margin-left: 1px; }
.ml2 { margin-left: 2px; }
.ml3 { margin-left: 3px; }

/* windows taskbar */
.taskbar {
  height: 40px;
  display: flex;
  align-items: center;
  background: #0f0f0f;
  color: #e8e8e8;
}

.start {
  width: 16px;
  height: 16px;
  margin-left: 16px;
}

.tsearch {
  width: 288px;
  height: 40px;
  box-sizing: border-box;
  margin-left: 16px;
  border: 1px solid #5f5f5f;
  background: #3b3b3b;
  display: flex;
  align-items: center;
  position: relative;
}

.ts-mag { margin-left: 12px; }

.ts-text {
  margin-left: 11px;
  font-size: 14.500px;
  color: #d8d8d8;
}

.ts-art {
  position: absolute;
  right: 1px;
  top: 1px;
  width: 74px;
  height: 38px;
}

.t-ic {
  width: 20px;
  height: 20px;
}

.taskview {
  margin-left: 15px;
}

.task {
  height: 40px;
  width: 48px;
  box-sizing: border-box;
  display: flex;
  align-items: center;
  justify-content: center;
  flex-shrink: 0;
}

.task .t-ic { width: 24px; height: 24px; }
.edge { margin-left: 17px; }
.explorer { border-bottom: 2px solid #76b9ed; }
.mail, .word { margin-left: 1px; }
.acad {
  background: #333;
  border-bottom: 2px solid #76b9ed;
}

.tray {
  margin-left: auto;
  margin-right: 13px;
  display: flex;
  align-items: center;
}

.sun {
  width: 20px;
  height: 20px;
  border-radius: 50%;
  background: linear-gradient(#f3b01c, #ee6a10);
}

.weather {
  margin-left: 10px;
  width: 95px;
  font-size: 13.500px;
}

.tr-ic {
  width: 16px;
  height: 16px;
  margin-right: 8px;
}

.tr-up { width: 14px; height: 14px; margin-right: 8px; }
.tr-cloud { width: 18px; height: 12px; margin-right: 7px; }
.tr-batt { width: 18px; height: 16px; margin-right: 8px; }
.tr-wifi { margin-right: 6px; }

.lang {
  width: 32px;
  text-align: center;
  font-size: 12px;
}

.clock {
  width: 64px;
  margin-left: 5px;
  text-align: center;
  font-size: 11.500px;
  line-height: 22px;
}

.notif {
  width: 40px;
  height: 40px;
  margin-left: 3px;
  display: flex;
  align-items: center;
  justify-content: center;
  position: relative;
}

.notif-ic { width: 16px; height: 18px; }

.badge {
  position: absolute;
  left: 19px;
  top: 18px;
  width: 16px;
  height: 16px;
  line-height: 16px;
  border-radius: 50%;
  background: #3a3a3a;
  border: 1px solid #999;
  box-sizing: border-box;
  text-align: center;
  font-size: 10.500px;
  font-weight: 700;
  color: #fff;
}

.word-w {
  font-family: "Liberation Sans", sans-serif;
  font-size: 11px;
  font-weight: bold;
  fill: #fff;
  text-anchor: middle;
}

.acad-cad {
  font-family: "Liberation Sans", sans-serif;
  font-size: 4px;
  font-weight: bold;
  fill: #e9c9d2;
  text-anchor: middle;
}
```
